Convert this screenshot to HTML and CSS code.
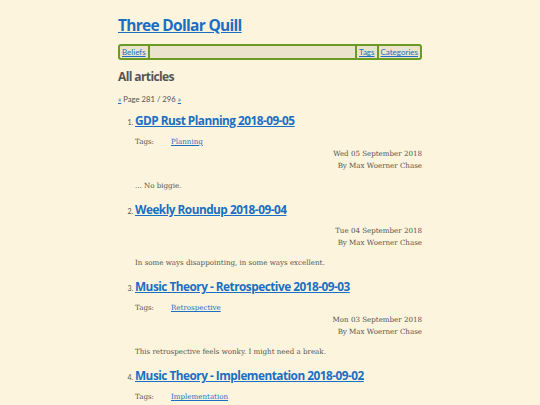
FILE: index.html
```html
<!DOCTYPE html>
<html>
<head>
<meta charset="utf-8">
<link rel="stylesheet" href="styles.css">
</head>
<body>
<div class="page">
  <header class="site-header">
    <h1 class="site-title"><a href="#">Three Dollar Quill</a></h1>
    <nav class="nav">
      <a class="nav-item" href="#">Beliefs</a>
      <span class="nav-fill"></span>
      <a class="nav-item nav-sep" href="#">Tags</a>
      <a class="nav-item nav-sep" href="#">Categories</a>
    </nav>
  </header>
  <main>
    <h2 class="section-title">All articles</h2>
    <p class="pager"><a href="#">«</a> Page 281 / 296 <a href="#">»</a></p>
    <ol class="articles" start="1">
      <li class="article">
        <h3 class="article-title"><a href="#">GDP Rust Planning 2018-09-05</a></h3>
        <div class="tags"><span class="tags-label">Tags:</span><a href="#">Planning</a></div>
        <div class="meta">
          <div>Wed 05 September 2018</div>
          <div>By Max Woerner Chase</div>
        </div>
        <p class="summary">... No biggie.</p>
      </li>
      <li class="article">
        <h3 class="article-title"><a href="#">Weekly Roundup 2018-09-04</a></h3>
        <div class="meta">
          <div>Tue 04 September 2018</div>
          <div>By Max Woerner Chase</div>
        </div>
        <p class="summary">In some ways disappointing, in some ways excellent.</p>
      </li>
      <li class="article">
        <h3 class="article-title"><a href="#">Music Theory - Retrospective 2018-09-03</a></h3>
        <div class="tags"><span class="tags-label">Tags:</span><a href="#">Retrospective</a></div>
        <div class="meta">
          <div>Mon 03 September 2018</div>
          <div>By Max Woerner Chase</div>
        </div>
        <p class="summary">This retrospective feels wonky. I might need a break.</p>
      </li>
      <li class="article">
        <h3 class="article-title"><a href="#">Music Theory - Implementation 2018-09-02</a></h3>
        <div class="tags"><span class="tags-label">Tags:</span><a href="#">Implementation</a></div>
        <div class="meta">
          <div>Sun 02 September 2018</div>
          <div>By Max Woerner Chase</div>
        </div>
        <p class="summary">Implementation notes.</p>
      </li>
    </ol>
  </main>
</div>
</body>
</html>
```
FILE: styles.css
```css
html, body {
  margin: 0;
  padding: 0;
  background: #fcf4dc;
}
body {
  font-family: "DejaVu Serif", serif;
  color: #555;
  font-size: 7.1px;
}
a {
  color: #1a6fc4;
}
.page {
  width: 304px;
  margin: 0 auto;
  padding-top: 14px;
}
.site-title {
  margin: 0;
  font-family: "Open Sans", sans-serif;
  font-weight: 700;
  font-size: 15.5px;
  letter-spacing: -0.7px;
  line-height: 22px;
}
.nav {
  margin-top: 8px;
  display: flex;
  align-items: stretch;
  border: 2px solid #6b9b22;
  border-radius: 3px;
  background: #ebe3cc;
  height: 12px;
  font-family: Lato, sans-serif;
  font-size: 8px;
  line-height: 12px;
}
.nav-item {
  padding: 0 2px;
}
.nav-fill {
  flex: 1;
  border-left: 2px solid #6b9b22;
  border-right: 2px solid #6b9b22;
}
.nav-sep + .nav-sep {
  border-left: 2px solid #6b9b22;
}
.section-title {
  margin: 9px 0 0;
  font-family: "Open Sans", sans-serif;
  font-weight: 700;
  font-size: 12px;
  letter-spacing: -0.6px;
  line-height: 16px;
  color: #555;
}
.pager {
  margin: 9px 0 0;
  font-family: Lato, sans-serif;
  font-size: 7.7px;
  line-height: 10px;
}
.articles {
  margin: 8px 0 0;
  padding-left: 17px;
}
.article::marker {
  font-size: 7px;
  font-family: Lato, sans-serif;
}
.article-title {
  margin: 0;
  font-family: "Open Sans", sans-serif;
  font-weight: 700;
  font-size: 11.8px;
  letter-spacing: -0.5px;
  line-height: 16px;
}
.tags {
  margin-top: 8px;
  line-height: 12px;
}
.tags-label {
  display: inline-block;
  width: 36px;
}
.meta {
  margin-top: 0;
  text-align: right;
  line-height: 12px;
}
.article-title + .meta {
  margin-top: 8px;
}
.summary {
  margin: 8px 0 9px;
  line-height: 12px;
}
```
